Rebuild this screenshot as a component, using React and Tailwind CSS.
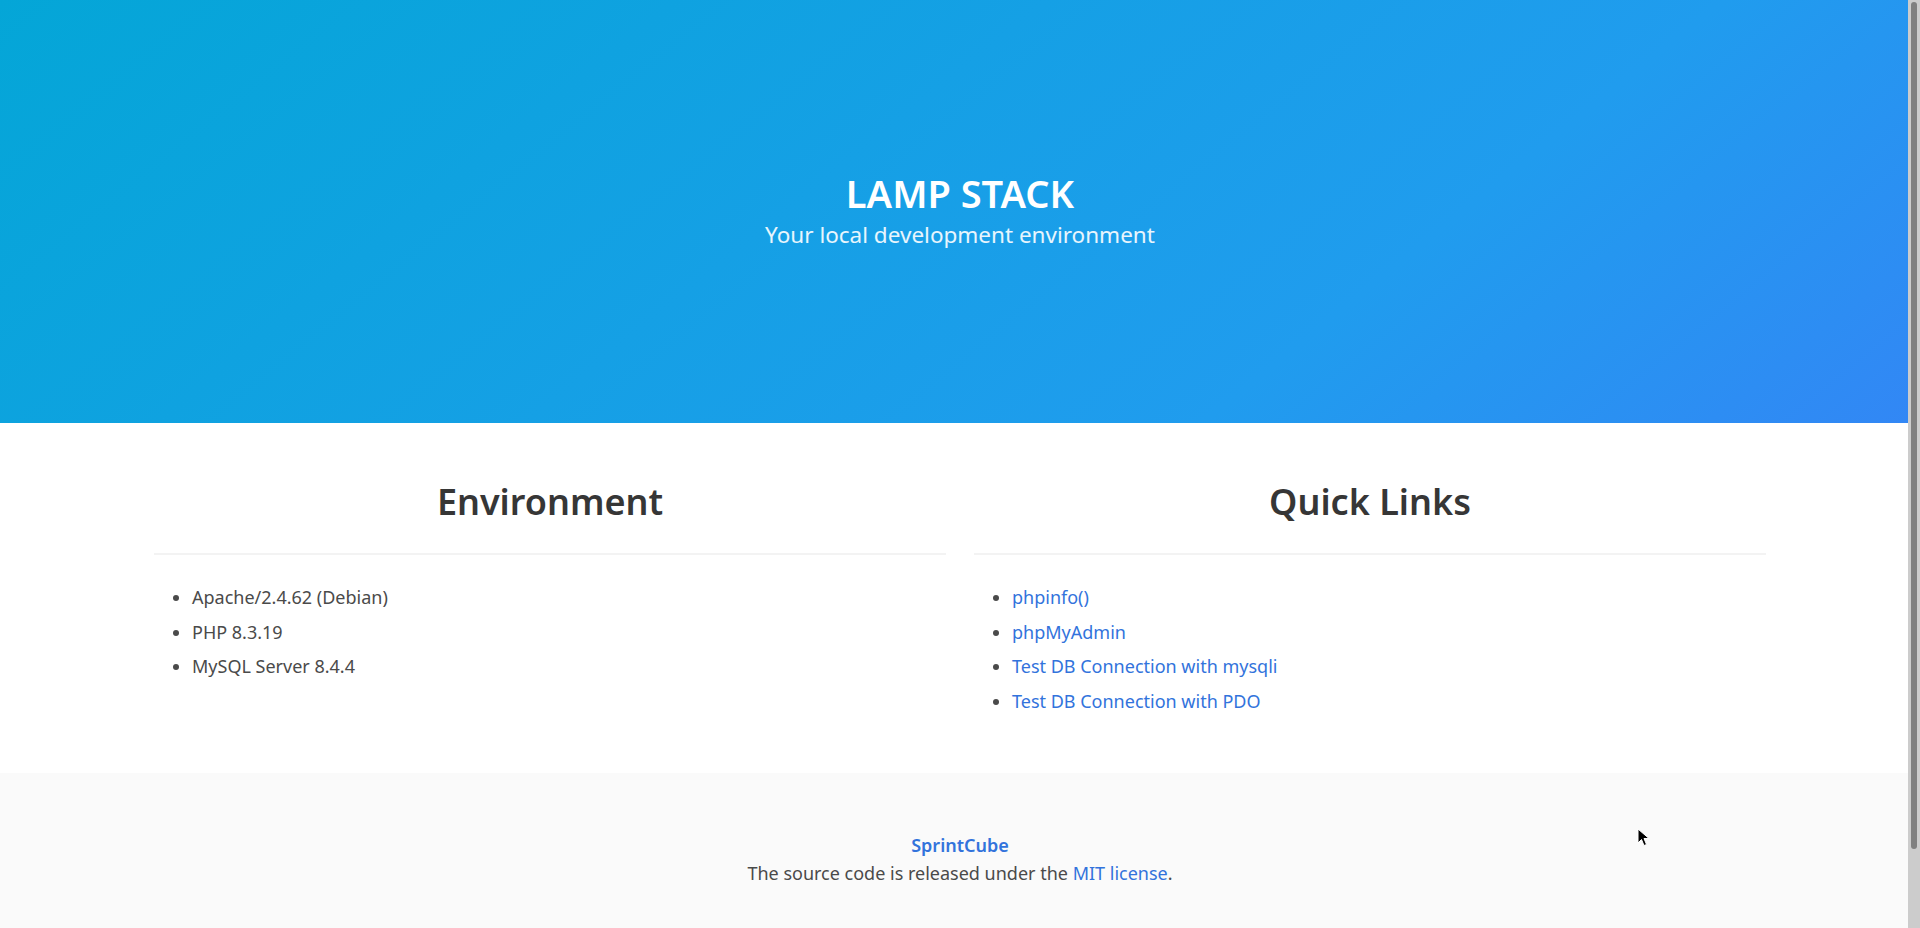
import React from "react";

const envItems = ["Apache/2.4.62 (Debian)", "PHP 8.3.19", "MySQL Server 8.4.4"];

const links = [
  "phpinfo()",
  "phpMyAdmin",
  "Test DB Connection with mysqli",
  "Test DB Connection with PDO",
];

const Column = ({ title, children }) => (
  <div className="flex flex-col">
    <h2 className="text-center text-[36px] leading-[40px] font-semibold text-[#363636]">{title}</h2>
    <hr className="mt-[31px] h-[2px] border-0 bg-[#f3f3f3]" />
    <ul className="mt-[25px] list-disc pl-[38px] text-[18px] text-[#4a4a4a] marker:text-[#4a4a4a]">
      {children}
    </ul>
  </div>
);

const App = () => {
  return (
    <div className="flex h-[928px] overflow-hidden bg-white font-['Noto_Sans',sans-serif]">
      <div className="relative flex flex-1 flex-col">
        {/* Hero */}
        <section className="flex h-[423px] flex-col items-center justify-center bg-[linear-gradient(141deg,#04a6d7_0%,#209cee_71%,#3287f5_100%)] pl-[12px] text-white">
          <h1 className="text-[38px] leading-[40px] font-semibold">LAMP STACK</h1>
          <p className="mt-[7px] text-[22.5px] leading-[30px] text-white/90">Your local development environment</p>
        </section>

        {/* Content */}
        <section className="h-[350px] pt-[59px]">
          <div className="ml-[154px] grid w-[1612px] grid-cols-2 gap-[28px]">
            <Column title="Environment">
              {envItems.map((item) => (
                <li key={item} className="leading-[34.5px]">{item}</li>
              ))}
            </Column>
            <Column title="Quick Links">
              {links.map((item) => (
                <li key={item} className="leading-[34.5px]">
                  <a href="#" className="text-[#3273dc]">{item}</a>
                </li>
              ))}
            </Column>
          </div>
        </section>

        {/* Footer */}
        <footer className="flex flex-1 flex-col items-center bg-[#fafafa] pt-[58px] pl-[12px] text-[18px] leading-[28px] text-[#4a4a4a]">
          <a href="#" className="font-semibold text-[#3273dc]">SprintCube</a>
          <p>
            The source code is released under the{" "}
            <a href="#" className="text-[#3273dc]">MIT license</a>.
          </p>
        </footer>

        {/* mouse cursor */}
        <svg className="absolute left-[1637px] top-[828px]" width="14" height="20" viewBox="0 0 14 20">
          <path d="M1 1 L1 15 L4.5 11.5 L7 17.5 L9.5 16.5 L7 10.5 L12 10.5 Z" fill="#000" stroke="#fff" strokeWidth="1" />
        </svg>
      </div>

      {/* scrollbar */}
      <div className="flex w-[12px] justify-center bg-[#cccccc] pt-[2px]">
        <div className="h-[847px] w-[6px] rounded-full bg-[#808080]" />
      </div>
    </div>
  );
};

export default App;
